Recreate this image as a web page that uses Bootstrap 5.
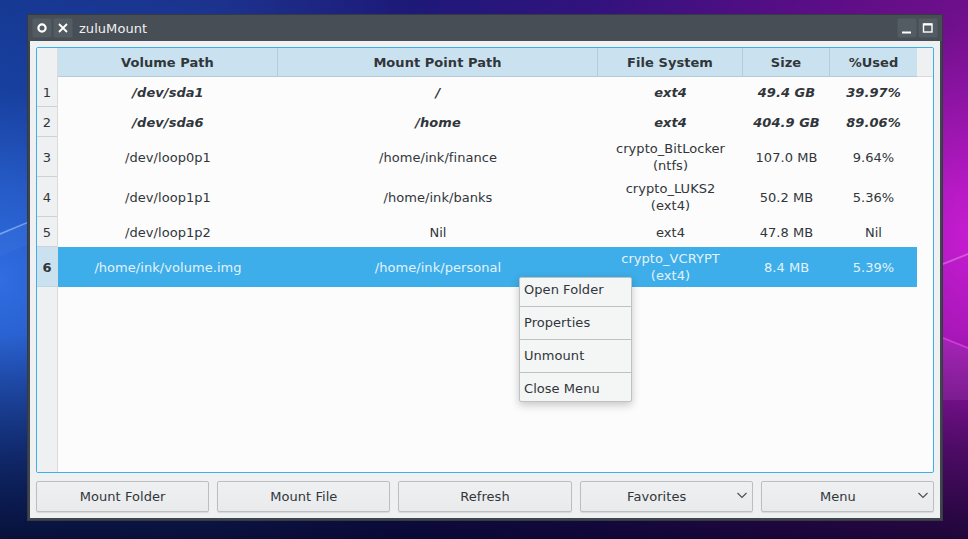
<!doctype html>
<html lang="en">
<head>
<meta charset="utf-8">
<title>zuluMount</title>
<link href="https://cdn.jsdelivr.net/npm/bootstrap@5.3.0/dist/css/bootstrap.min.css" rel="stylesheet">
<style>
html,body{height:100%}
body{margin:0;width:968px;height:539px;overflow:hidden;font-family:"DejaVu Sans",sans-serif;font-size:13px;letter-spacing:.05px;color:#31363b;
 background:
 linear-gradient(to bottom,rgba(5,5,60,.22) 0%,rgba(0,0,0,0) 35%,rgba(0,0,0,0) 62%,rgba(3,3,30,.8) 100%),
 radial-gradient(ellipse 170px 190px at 0% 52%,rgba(60,130,255,.65),rgba(60,130,255,0) 100%),
 radial-gradient(ellipse 170px 210px at 100% 44%,rgba(235,35,240,.6),rgba(235,35,240,0) 100%),
 linear-gradient(90deg,#1a48ac 0%,#2240a4 22%,#241f88 42%,#3f1690 62%,#6a1098 80%,#8c12a0 100%);
 padding:14px 25px 18px 27px}
.desk-ray{position:absolute;left:0;top:0;width:968px;height:539px}
.app-win{position:relative;height:507px;width:916px;background:#3f464b;border:1px solid #343a3f;display:flex;flex-direction:column}
.app-title{height:26px;color:#eff0f1;font-size:13px;flex:none;background:#474e55;padding:0 4px}
.app-title span{margin-left:6px;padding-top:2px}
.tb-btn{width:20px;height:20px;background:#545c63;border-radius:2px;display:flex;align-items:center;justify-content:center;border:1px solid #4d555c}
.tb-gap{gap:1px}
.app-body{flex:1;background:#eff0f1;margin:0 2px 2px;padding:6px;display:flex;flex-direction:column;min-height:0;position:relative}
.tbl-frame{flex:1;border:1px solid #3daee9;border-radius:2px;background:#fcfcfc;overflow:hidden;position:relative;min-height:0;display:flex}
.row-heads{width:21px;flex:none;background:#eff0f1;border-right:1px solid #d9dbdd;display:flex;flex-direction:column}
.rh-corner{height:29px;flex:none}
.rh{display:flex;align-items:center;justify-content:center;border-bottom:1px solid #cfd2d4;color:#31363b;flex:none;padding-top:2px}
.rh.on{background:#cae2ef;font-weight:700;border-bottom-color:#c0d6e2}
.h30{height:30px}.h40{height:40px}
.tbl-grid{flex:none;width:859px;--bs-table-bg:transparent;--bs-table-color:#31363b;margin:0;table-layout:fixed;border-collapse:separate;border-spacing:0}
.tbl-grid>*>tr>*{padding:0;border:0;text-align:center;vertical-align:middle;line-height:17px;font-size:13px;background:transparent}
.tbl-grid th{height:29px;background:#cae2ef!important;border-right:1px solid #b5cbd8!important;border-bottom:1px solid #b5cbd8!important;font-weight:700;color:#31363b}
.tbl-grid th:last-child{border-right:0!important}
.tbl-grid .bi td{font-weight:700;font-style:italic}
.tbl-grid .sel td{background:#3daee9;color:#e3f2fb}
.hdr-fill{flex:1;background:#eff0f1;height:29px;border-bottom:1px solid #d9dbdd}
.ctx{position:absolute;left:519px;top:277px;width:113px;height:125px;background:#f4f5f5;border:1px solid #bfc2c4;border-radius:2px;box-shadow:0 3px 8px rgba(0,0,0,.22);color:#31363b;line-height:17px}
.ctx div{height:33px;padding:7px 4px 0;border-bottom:1px solid #bfc2c4}
.ctx div:first-child{height:29px;padding-top:3px}
.ctx div:last-child{height:28px;border-bottom:0}
.btn-bar{flex:none;display:grid;grid-template-columns:repeat(5,1fr);column-gap:8px;margin-top:8px;height:31px}
.q-btn{position:relative;font-size:13px;letter-spacing:.05px;color:#31363b;background:linear-gradient(#eff0f2,#e9eaec);border:1px solid #bcbebf;border-radius:2px;padding:0;display:flex;align-items:center;justify-content:center;box-shadow:0 1px 1px rgba(0,0,0,.1)}
.q-btn.has-caret{padding-right:19px}
.q-btn svg{position:absolute;right:5px;top:10px}
.q-btn.btn:hover{color:#31363b}
</style>
</head>
<body>
<svg class="desk-ray" viewBox="0 0 968 539" aria-hidden="true">
<path d="M0 233L27 222V223.5L0 235Z" fill="#a9cbff" opacity=".6"/>
<path d="M0 235L27 222V245L0 256Z" fill="#5a8cf0" opacity=".12"/>
<path d="M943 263L968 253V255L943 265Z" fill="#f0a0f5" opacity=".45"/>
<path d="M943 337L968 347V349L943 339Z" fill="#f050f5" opacity=".6"/>
<path d="M943 339L968 349V400L943 400Z" fill="#b060c0" opacity=".18"/>
</svg>
<div class="app-win">
 <div class="app-title d-flex align-items-center">
  <div class="d-flex tb-gap">
   <div class="tb-btn"><svg width="12" height="12" viewBox="0 0 12 12"><circle cx="6" cy="6" r="3.6" fill="none" stroke="#fff" stroke-width="2.2"/></svg></div>
   <div class="tb-btn"><svg width="12" height="12" viewBox="0 0 12 12"><path d="M2 2L10 10M10 2L2 10" stroke="#fff" stroke-width="1.8"/></svg></div>
  </div>
  <span>zuluMount</span>
  <div class="d-flex tb-gap ms-auto">
   <div class="tb-btn"><svg width="12" height="12" viewBox="0 0 12 12"><path d="M1 10.5H10" stroke="#fff" stroke-width="2"/></svg></div>
   <div class="tb-btn"><svg width="12" height="12" viewBox="0 0 12 12"><rect x="1.5" y="2" width="8.5" height="8" fill="none" stroke="#fff" stroke-width="1.4"/><path d="M1.5 2.5H10" stroke="#fff" stroke-width="2"/></svg></div>
  </div>
 </div>
 <div class="app-body">
  <div class="tbl-frame">
   <div class="row-heads">
    <div class="rh-corner"></div>
    <div class="rh h30">1</div><div class="rh h30">2</div><div class="rh h40">3</div><div class="rh h40">4</div><div class="rh h30">5</div><div class="rh h40 on">6</div>
   </div>
   <table class="table tbl-grid">
    <colgroup><col style="width:220px"><col style="width:320px"><col style="width:145px"><col style="width:87px"><col style="width:87px"></colgroup>
    <thead><tr><th>Volume Path</th><th>Mount Point Path</th><th>File System</th><th>Size</th><th>%Used</th></tr></thead>
    <tbody>
     <tr class="bi"><td class="h30">/dev/sda1</td><td>/</td><td>ext4</td><td>49.4 GB</td><td>39.97%</td></tr>
     <tr class="bi"><td class="h30">/dev/sda6</td><td>/home</td><td>ext4</td><td>404.9 GB</td><td>89.06%</td></tr>
     <tr><td class="h40">/dev/loop0p1</td><td>/home/ink/finance</td><td>crypto_BitLocker<br>(ntfs)</td><td>107.0 MB</td><td>9.64%</td></tr>
     <tr><td class="h40">/dev/loop1p1</td><td>/home/ink/banks</td><td>crypto_LUKS2<br>(ext4)</td><td>50.2 MB</td><td>5.36%</td></tr>
     <tr><td class="h30">/dev/loop1p2</td><td>Nil</td><td>ext4</td><td>47.8 MB</td><td>Nil</td></tr>
     <tr class="sel"><td class="h40">/home/ink/volume.img</td><td>/home/ink/personal</td><td>crypto_VCRYPT<br>(ext4)</td><td>8.4 MB</td><td>5.39%</td></tr>
     <tr class="tail"><td colspan="5"></td></tr>
    </tbody>
   </table>
   <div class="hdr-fill"></div>
  </div>
  <div class="btn-bar">
   <button type="button" class="btn q-btn">Mount Folder</button>
   <button type="button" class="btn q-btn">Mount File</button>
   <button type="button" class="btn q-btn">Refresh</button>
   <button type="button" class="btn q-btn has-caret">Favorites<svg width="10" height="7" viewBox="0 0 10 7"><path d="M.5 1L5 5.5L9.5 1" fill="none" stroke="#4d5257" stroke-width="1.2"/></svg></button>
   <button type="button" class="btn q-btn has-caret">Menu<svg width="10" height="7" viewBox="0 0 10 7"><path d="M.5 1L5 5.5L9.5 1" fill="none" stroke="#4d5257" stroke-width="1.2"/></svg></button>
  </div>
 </div>
</div>
<div class="ctx"><div>Open Folder</div><div>Properties</div><div>Unmount</div><div>Close Menu</div></div>
<script src="https://cdn.jsdelivr.net/npm/bootstrap@5.3.0/dist/js/bootstrap.bundle.min.js"></script>
</body>
</html>
